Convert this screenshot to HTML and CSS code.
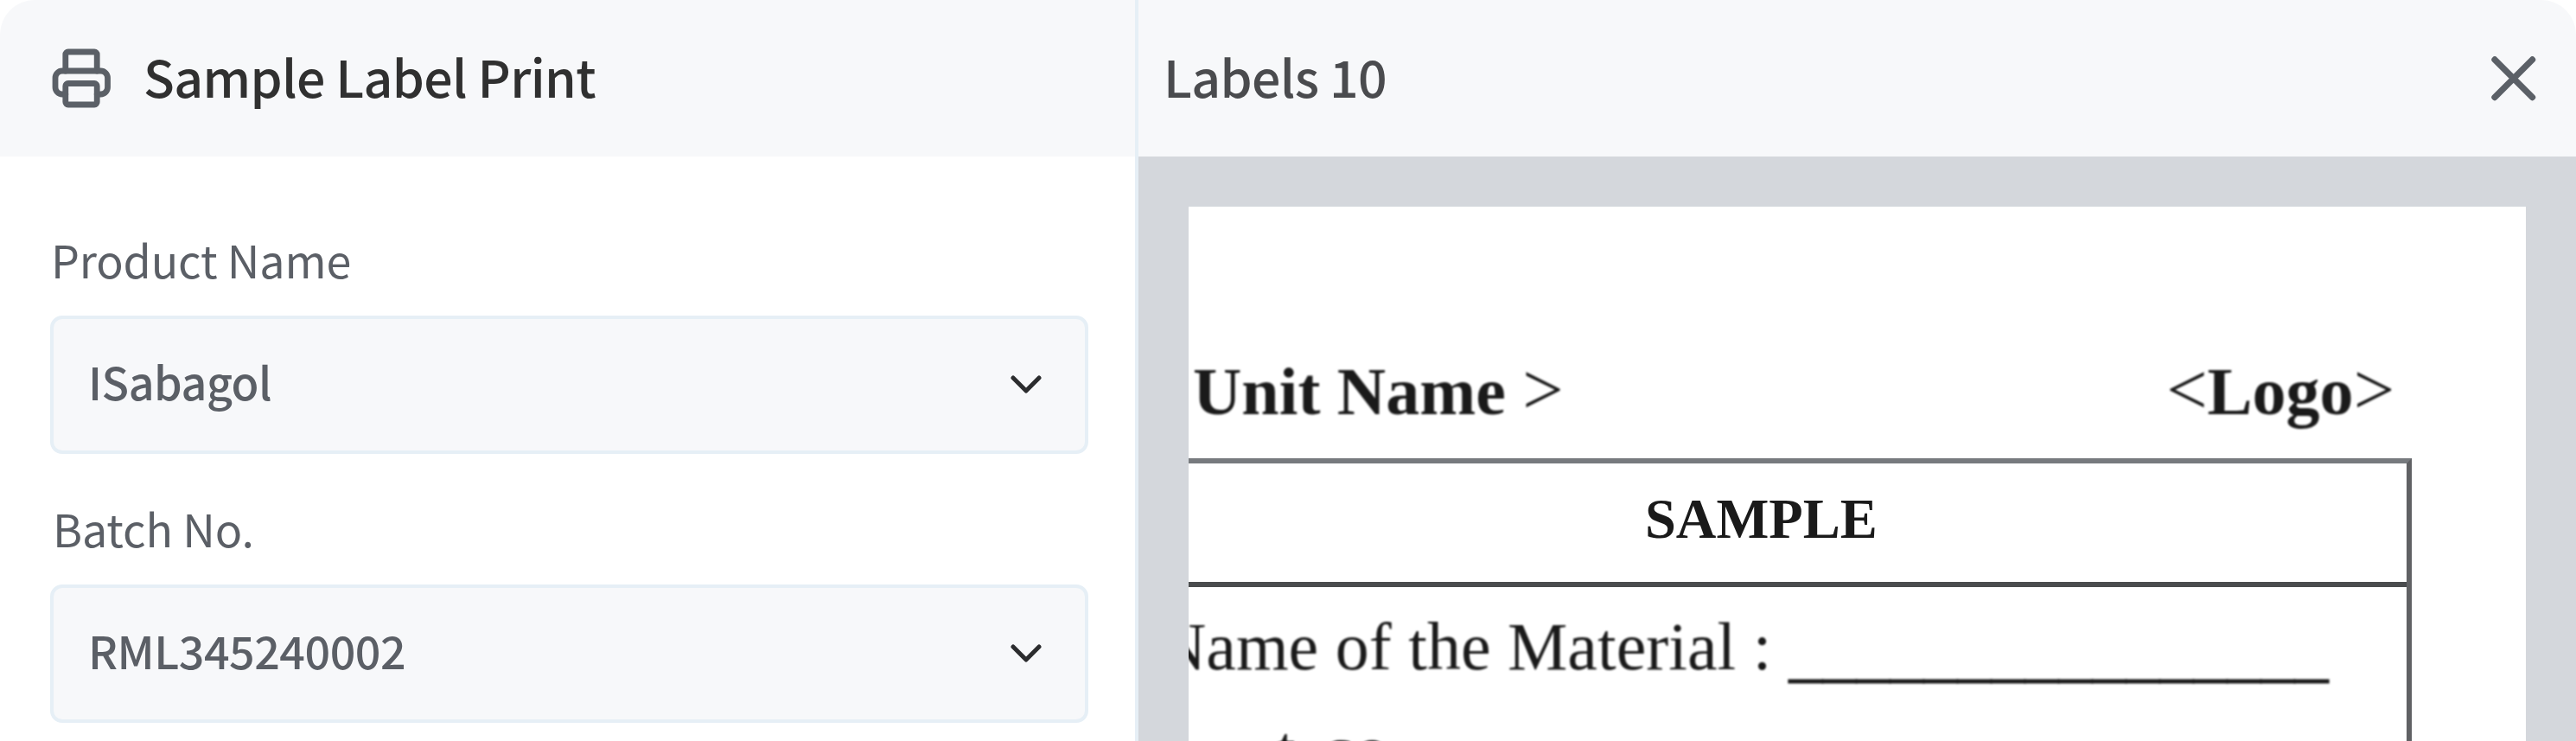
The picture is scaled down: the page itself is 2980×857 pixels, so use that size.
FILE: index.html
```html
<!DOCTYPE html>
<html lang="en">
<head>
  <meta charset="UTF-8">
  <meta name="viewport" content="width=device-width, initial-scale=1.0">
  <title>Sample Label Print</title>
  <link rel="stylesheet" href="styles.css">
</head>
<body>

<div class="modal">
  <!-- Form side -->
  <section class="form-panel">
    <header class="panel-header">
      <svg class="print-icon" viewBox="0 0 78 78">
        <path d="M20.800 30V11a3 3 0 0 1 3-3h30.400a3 3 0 0 1 3 3v19"/>
        <path d="M20.800 57H17a8 8 0 0 1-8-8V38a8 8 0 0 1 8-8h44.500a8 8 0 0 1 8 8v11a8 8 0 0 1-8 8h-4.300"/>
        <rect x="20.800" y="44.500" width="36.400" height="24.500" rx="3"/>
      </svg>
      <h1>Sample Label Print</h1>
    </header>

    <form class="print-form">
      <div class="form-group">
        <label>Product Name</label>
        <div class="select-box">
          <span>ISabagol</span>
          <svg class="chevron" viewBox="0 0 36 22"><path d="M3 3l15 15L33 3"/></svg>
        </div>
      </div>
      <div class="form-group">
        <label class="batch-label">Batch No.</label>
        <div class="select-box">
          <span>RML345240002</span>
          <svg class="chevron" viewBox="0 0 36 22"><path d="M3 3l15 15L33 3"/></svg>
        </div>
      </div>
    </form>
  </section>

  <!-- Preview side -->
  <section class="preview-panel">
    <header class="panel-header preview-header">
      <h2>Labels 10</h2>
      <svg class="close-icon" viewBox="0 0 52 52"><path d="M4 4l43.500 43.500M47.500 4L4 47.500"/></svg>
    </header>

    <div class="preview-area">
      <div class="page">
        <div class="label-top">
          <div class="unit-name"><b>Unit Name</b> <span class="angle">&gt;</span></div>
          <div class="logo"><span class="angle">&lt;</span><b>Logo</b><span class="angle">&gt;</span></div>
        </div>
        <div class="label-table">
          <div class="label-title">SAMPLE</div>
          <div class="label-body">
            <div class="label-row">
              <span>Name of the Material :</span>
              <span class="blank">________________</span>
            </div>
            <div class="label-row next-row">t co</div>
          </div>
        </div>
      </div>
    </div>
  </section>
</div>

</body>
</html>
```
FILE: styles.css
```css
/* General Styling */
* {
  box-sizing: border-box;
}

body {
  margin: 0;
  background: #fff;
  font-family: 'Noto Sans CJK SC', 'Noto Sans', sans-serif;
  color: #5b5f66;
}

h1, h2 {
  margin: 0;
  font-weight: 500;
}

svg {
  fill: none;
  stroke: #5b6067;
  stroke-linecap: round;
  stroke-linejoin: round;
}

.modal {
  display: flex;
  height: 857px;
  border-radius: 40px 40px 0 0;
  overflow: hidden;
}

/* Headers */
.panel-header {
  display: flex;
  align-items: center;
  height: 181px;
  background: #f7f8fa;
}

.print-icon {
  width: 78px;
  height: 78px;
  margin: 0 33px 0 55px;
  stroke-width: 6.8;
}

.panel-header h1,
.panel-header h2 {
  padding-bottom: 6px;
  font-size: 59px;
  line-height: 80px;
  letter-spacing: -0.65px;
}

.panel-header h1 {
  color: #303030;
}

.panel-header h2 {
  color: #4a4b4e;
}

/* Form */
.form-panel {
  width: 1317px;
  border-right: 4px solid #e6eff6;
}

.print-form {
  padding: 84px 54px 0 58px;
}

.form-group {
  height: 311px;
}

.form-group label {
  display: block;
  height: 100px;
  padding-left: 1px;
  font-size: 52px;
  line-height: 70px;
  letter-spacing: -0.15px;
}

.form-group .batch-label {
  padding-left: 3px;
}

.select-box {
  display: flex;
  align-items: center;
  justify-content: space-between;
  height: 160px;
  padding: 0 50px 0 40px;
  background: #f7f8fa;
  border: 4px solid #e6eff6;
  border-radius: 14px;
  font-size: 52px;
  font-weight: 500;
  letter-spacing: -0.5px;
}

.select-box span {
  padding-bottom: 9px;
}

.chevron {
  width: 36px;
  height: 22px;
  stroke: #2b2c2e;
  stroke-width: 5;
}

/* Preview */
.preview-panel {
  flex: 1;
}

.preview-header {
  justify-content: space-between;
  padding: 0 46px 0 29px;
}

.close-icon {
  width: 52px;
  height: 52px;
  stroke-width: 7.4;
}

.preview-area {
  height: 676px;
  padding: 58px 58px 0;
  background: #d4d7dc;
}

.page {
  height: 618px;
  background: #fff;
  overflow: hidden;
  font-family: 'Liberation Serif', serif;
  font-size: 78px;
  color: #1a1a1a;
}

.label-top {
  display: flex;
  justify-content: space-between;
  height: 291px;
  padding: 169px 152px 0 5px;
  line-height: 90px;
  filter: blur(0.8px);
}

.angle {
  font-size: 84px;
  line-height: 0;
}

.label-table {
  width: 1415px;
  height: 400px;
  border-top: 6px solid #777a7e;
  border-right: 6px solid #606164;
}

.label-title {
  height: 143px;
  padding-left: 528px;
  border-bottom: 6px solid #4a4c4e;
  font-size: 64.5px;
  font-weight: bold;
  line-height: 130px;
}

.label-row {
  display: flex;
  height: 118px;
  margin-left: -36px;
  padding-top: 24px;
  line-height: 90px;
  white-space: nowrap;
  filter: blur(0.8px);
}

.blank {
  margin: 6px 0 0 20px;
  -webkit-text-stroke: 1px #1a1a1a;
}

.next-row {
  margin-left: 102px;
  padding-top: 25px;
  letter-spacing: 3px;
  word-spacing: 6px;
}
```
